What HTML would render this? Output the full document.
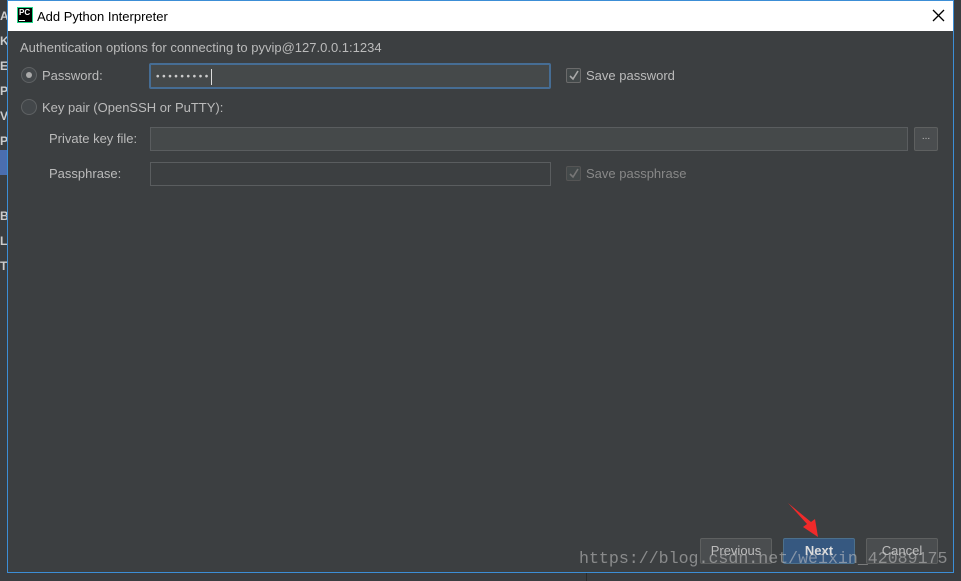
<!DOCTYPE html>
<html><head><style>
*{margin:0;padding:0;box-sizing:border-box}
body{width:961px;height:581px;background:#3a3d40;position:relative;overflow:hidden;font-family:"Liberation Sans",sans-serif;font-size:13px;color:#bbbbbb}
.a{position:absolute}
.dlg{left:7px;top:0;width:947px;height:573px;border:1px solid #3c8ed6;background:#3c3f41}
.in{position:absolute;left:-1px;top:-1px;width:947px;height:573px}
.title{left:1px;top:1px;width:945px;height:30px;background:#fff;color:#000;font-size:13px}
.field{border:1px solid #5a5d5f;background:#45494a;height:24px}
.btn{height:26px;border:1px solid #5e6060;background:#4a4d4f;border-radius:2px;text-align:center;line-height:24px;color:#bbb}
.cb{width:15px;height:15px;border:1px solid #6b6b6b;background:#43494a;border-radius:2px}
.rad{width:16px;height:16px;border:1px solid #5f6264;border-radius:50%;background:#43474a}
</style></head><body>
<div class="a" style="left:0;top:150px;width:7px;height:25px;background:#4b6eaf"></div>
<div class="a" style="left:0;top:4px;font-weight:bold;font-size:12px;line-height:25px;color:#ccc;width:7px;overflow:hidden">A<br>K<br>E<br>P<br>V<br>P<br><br><br>B<br>L<br>T</div>
<div class="a" style="left:586px;top:573px;width:1px;height:8px;background:#2b2b2b"></div>
<div class="a dlg"><div class="in">
 <div class="a title">
  <div class="a" style="left:9px;top:6px;width:16px;height:16px;background:#000;border:1px solid #21d789;color:#fff;font-size:8px;font-weight:bold;line-height:9px;padding-left:1px">PC<div style="width:6px;height:1px;background:#fff;margin-top:3px"></div></div>
  <div class="a" style="left:29px;top:8px">Add Python Interpreter</div>
  <svg class="a" style="left:924px;top:8px" width="13" height="13"><path d="M1 1L12 12M12 1L1 12" stroke="#000" stroke-width="1.3"/></svg>
 </div>
 <div class="a" style="left:13px;top:40px">Authentication options for connecting to pyvip@127.0.0.1:1234</div>
 <div class="a rad" style="left:14px;top:67px"><div style="width:6px;height:6px;border-radius:50%;background:#aaa;margin:4px"></div></div>
 <div class="a" style="left:35px;top:68px">Password:</div>
 <div class="a" style="left:142px;top:63px;width:402px;height:26px;border:2px solid #466d94;background:#45494a;border-radius:2px;color:#ccc;font-size:10px;padding:4px 0 0 5px;letter-spacing:2.6px">•••••••••<span style="display:inline-block;width:1px;height:16px;background:#ddd;vertical-align:middle"></span></div>
 <div class="a cb" style="left:559px;top:68px"><svg width="13" height="13"><path d="M3 7L6 10L11 2" stroke="#aaa" stroke-width="1.6" fill="none"/></svg></div>
 <div class="a" style="left:579px;top:68px">Save password</div>
 <div class="a rad" style="left:14px;top:99px"></div>
 <div class="a" style="left:35px;top:100px">Key pair (OpenSSH or PuTTY):</div>
 <div class="a" style="left:42px;top:131px">Private key file:</div>
 <div class="a field" style="left:143px;top:127px;width:758px"></div>
 <div class="a btn" style="left:907px;top:127px;width:24px;height:24px;line-height:18px;font-size:10px">...</div>
 <div class="a" style="left:42px;top:166px">Passphrase:</div>
 <div class="a field" style="left:143px;top:162px;width:401px;background:#3c3f41"></div>
 <div class="a cb" style="left:559px;top:166px;border-color:#555"><svg width="13" height="13"><path d="M3 7L6 10L11 2" stroke="#777" stroke-width="1.6" fill="none"/></svg></div>
 <div class="a" style="left:579px;top:166px;color:#888">Save passphrase</div>
 <div class="a btn" style="left:693px;top:538px;width:72px">Previous</div>
 <div class="a btn" style="left:776px;top:538px;width:72px;background:#365880;border-color:#4c708c;font-weight:bold;color:#ddd">Next</div>
 <div class="a btn" style="left:859px;top:538px;width:72px">Cancel</div>
 <svg class="a" style="left:778px;top:500px" width="40" height="40"><path d="M3 3L22 24L18 27L33 37L30 19L26 22Z" fill="#f02a2a"/></svg>
 <div class="a" style="left:572px;top:549px;font-family:'Liberation Mono',monospace;font-size:16.6px;color:rgba(200,200,200,0.55)">https://blog.csdn.net/weixin_42089175</div>
</div></div>
</body></html>
